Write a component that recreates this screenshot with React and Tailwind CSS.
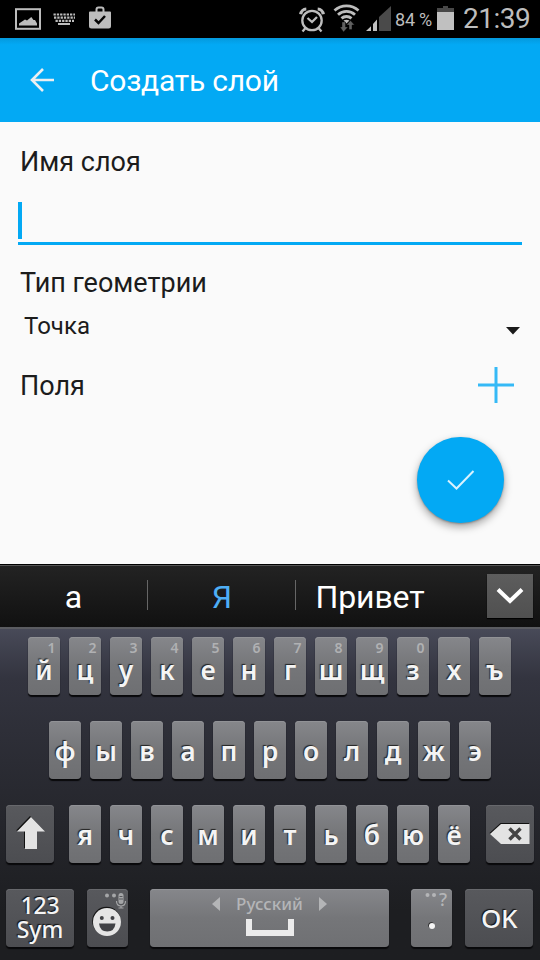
import React from 'react';

const NUMS = '1234567890';

function Key({ label, hint, top }) {
  return (
    <div className="relative flex h-[58px] w-8 shrink-0 items-start justify-center rounded-[4px] bg-linear-to-b from-[#86878b] via-[#757679] to-[#6e6f72] shadow-[0_2px_1px_#08080a,inset_0_1px_0_#919296]">
      {hint && <span className="absolute top-[4px] right-[4.500px] font-['Noto_Sans',sans-serif] text-[14px] leading-[14px] font-semibold text-[#b0b1b3]">{hint}</span>}
      <span className={`${top ? 'mt-[21px]' : 'mt-[18px]'} font-['Noto_Sans',sans-serif] text-[26.500px] leading-6 font-semibold text-[#f4f4f4] [text-shadow:-1px_-1px_1px_#222]`}>{label}</span>
    </div>
  );
}

function DarkKey({ className, children }) {
  return (
    <div className={`relative flex h-[58px] shrink-0 items-center justify-center rounded-[4px] bg-linear-to-b from-[#58595d] to-[#4c4d51] shadow-[0_2px_1px_#08080a,inset_0_1px_0_#67686c] ${className}`}>
      {children}
    </div>
  );
}

function StatusBar() {
  return (
    <div className="flex h-[38px] bg-black">
      <svg width="120" height="38" viewBox="0 0 120 38" fill="#bdbdbd">
        <rect x="16" y="9.2" width="24" height="19.6" fill="none" stroke="#bdbdbd" strokeWidth="2" />
        <path d="M19 25.5v-2l6-4 2 1 4.3-3.5 2.2 3h1.500l2 3.500v2z" />
        <path d="M53.500 14.500h21.500M54 17.700h21" stroke="#bdbdbd" strokeWidth="2.200" strokeDasharray="2.300 1" fill="none" />
        <path d="M55.500 20.900h18.500" stroke="#bdbdbd" strokeWidth="2.200" strokeDasharray="2.300 1" fill="none" />
        <rect x="58" y="23" width="12" height="2" />
        <path d="M90 11.500h5.500V9.500q0-3 3-3h3q3 0 3 3v2h5.500q1 0 1 1V26q0 2.500-2.500 2.500h-17Q89 28.500 89 26V12.500q0-1 1-1zm7.500 0h5v-2q0-1-1-1h-3q-1 0-1 1z" />
        <path d="M95 19.500l3.500 3.500 6.500-7" fill="none" stroke="#050505" strokeWidth="2.500" />
      </svg>
      <div className="flex-1" />
      <svg width="104" height="38" viewBox="290 0 104 38" fill="none">
        <g stroke="#bdbdbd" strokeWidth="2.300">
          <circle cx="312" cy="20.500" r="9.700" />
          <path d="M300.700 14.300a6 6 0 0 1 5.600-5.300M323.300 14.300a6 6 0 0 0-5.600-5.300" strokeWidth="3.200" />
          <path d="M305.300 28.200l-2.800 3.300M318.700 28.200l2.800 3.300M307.500 18l4.500 4 5-5" />
        </g>
        <g stroke="#bdbdbd" strokeWidth="2.800">
          <path d="M334.500 10.500a18 18 0 0 1 24 0M338 14.700a12.500 12.500 0 0 1 17 0M341.500 18.400a7.500 7.500 0 0 1 10 0" />
        </g>
        <path d="M343.500 20.600q3-1.500 6 0L346.500 23.500z" fill="#bdbdbd" />
        <path d="M342 22h3.500v5h2.500L343.500 32l-3.500-5h2zM349 29.500V25h-2.500L350.500 20.500l4 4.500H352v4.500z" fill="#606060" stroke="#000" strokeWidth=".4" />
        <path d="M391 6v25h-12V17z" fill="#4a4a4a" />
        <path d="M366 31l5-4.700V31zM373 24l4-4.500V31h-4z" fill="#c0c0c0" />
      </svg>
      <span className="w-[42px] pt-[8px] pl-[1px] font-['Roboto',sans-serif] text-[18px] leading-6 tracking-[-0.2px] whitespace-pre text-[#bdbdbd]">84 %</span>
      <svg width="24" height="38" viewBox="0 0 24 38">
        <path d="M1 8h6V6h5v2h6v22H1z" fill="#484848" />
        <path d="M1 12h17v18H1z" fill="#c0c0c0" />
      </svg>
      <span className="w-[80px] pt-[3px] pl-[3px] font-['Roboto',sans-serif] text-[28px] leading-8 tracking-[-0.500px] text-[#bdbdbd]">21:39</span>
    </div>
  );
}

export default function App() {
  return (
    <div className="flex h-[960px] w-[540px] flex-col overflow-hidden bg-[#fafafa] font-['Roboto',sans-serif]">
      <StatusBar />
      <header className="flex h-[84px] items-center bg-[#03a9f4] bg-linear-to-b from-[#0499dd] from-0% to-[#03a9f4] to-8%">
        <svg className="ml-[30px]" width="26" height="26" viewBox="0 0 26 26" fill="none" stroke="#eceff1" strokeWidth="2.600">
          <path d="M24 13H2M13 2L2 13l11 11" />
        </svg>
        <h1 className="mt-0.5 ml-[34px] text-[30px] leading-9 tracking-[-0.250px] text-white">Создать слой</h1>
      </header>

      <main className="flex h-[442px] flex-col text-[#1c1c1c]">
        <label className="mt-6 ml-5 text-[27px] leading-8">Имя слоя</label>
        <div className="mx-[18px] mt-6 h-[43px] border-b-[3px] border-[#03a9f4]">
          <div className="h-[37px] w-1 bg-[#03a9f4]" />
        </div>
        <label className="mt-[22px] ml-5 text-[27px] leading-8">Тип геометрии</label>
        <div className="mt-[11px] flex h-8 items-center justify-between pr-[19px] pl-6">
          <span className="text-[24px] leading-8">Точка</span>
          <svg className="mt-2.5" width="16" height="8" viewBox="0 0 16 8"><path d="M1 0h14L8 7.600z" fill="#1a1a1a" /></svg>
        </div>
        <div className="mt-[21px] flex h-[44px] items-center justify-between pr-[25px] pl-5">
          <span className="mt-0.5 text-[27px] leading-8">Поля</span>
          <svg width="38" height="38" viewBox="0 0 38 38" fill="none" stroke="#35b9f6" strokeWidth="3"><path d="M19 1v36M1 19h36" /></svg>
        </div>
        <div className="mt-[30px] mr-9 flex h-[86px] w-[87px] items-center justify-center self-end rounded-full bg-[#03a9f4] shadow-[0_4px_8px_rgba(0,0,0,0.35),0_1px_2px_rgba(0,0,0,0.25)]">
          <svg width="30" height="22" viewBox="0 0 30 22" fill="none" stroke="#d9f2fe" strokeWidth="2"><path d="M2 11.500l8.500 8L27.500 2" /></svg>
        </div>
      </main>

      <div className="flex h-[63px] items-center border-t border-black bg-linear-to-b from-[#232323] to-[#111] text-[32px] text-white shadow-[inset_0_1px_0_#555]">
        <span className="mt-0.5 w-[147px] text-center leading-9">а</span>
        <i className="mb-[3px] h-[30px] w-px bg-[#666]" />
        <span className="mt-0.5 w-[148px] text-center leading-9 text-[#4eaef5]">Я</span>
        <i className="mb-[3px] -ml-px h-[30px] w-px bg-[#666]" />
        <span className="mt-0.5 w-[148px] text-center leading-9 tracking-[-0.100px]">Привет</span>
        <div className="ml-[43px] flex h-11 w-[46px] items-center justify-center bg-linear-to-b from-[#5d5d5d] to-[#505050] shadow-[0_1px_1px_#000]">
          <svg width="30" height="20" viewBox="0 0 30 20" fill="none" stroke="#fff" strokeWidth="4"><path d="M3 3.500l12 11.500L27 3.500" /></svg>
        </div>
      </div>

      <div className="flex h-[333px] flex-col gap-[26px] border-t-2 border-[#5b5c61] bg-linear-to-b from-[#484a58] from-0% via-[#33343f] via-15% to-[#1d1e21] to-85% pt-2">
        <div className="flex gap-[9px] pl-7">
          {[...'йцукенгшщзхъ'].map((c, i) => <Key key={c} label={c} hint={NUMS[i]} top />)}
        </div>
        <div className="flex gap-[9px] pl-[49px]">
          {[...'фывапролджэ'].map((c) => <Key key={c} label={c} />)}
        </div>
        <div className="flex pl-1.5">
          <DarkKey className="w-12">
            <svg className="-mt-0.5 ml-0.5" width="30" height="36" viewBox="0 0 30 36"><path d="M15 2L1 16.500h8V34h12V16.500h8z" fill="#111" transform="translate(-1 -1)" /><path d="M15 2L1 16.500h8V34h12V16.500h8z" fill="#e3e3e3" /></svg>
          </DarkKey>
          <div className="ml-[15px] flex gap-[9px]">
            {[...'ячсмитьбюё'].map((c) => <Key key={c} label={c} />)}
          </div>
          <DarkKey className="ml-4 w-12">
            <svg width="42" height="24" viewBox="0 0 42 24"><path d="M1 12L12 2h28.500v20H12z" fill="#111" transform="translate(-.5 -1)" /><path d="M1 12L12 2h28.500v20H12z" fill="#e3e3e3" /><path d="M20.500 6.500l11 11M31.500 6.500l-11 11" stroke="#444" strokeWidth="3.500" /></svg>
          </DarkKey>
        </div>
        <div className="flex pl-1.5 font-['Noto_Sans',sans-serif] text-[#f5f5f5]">
          <DarkKey className="w-[68px] flex-col">
            <span className="text-[23px] leading-6 font-medium tracking-[-0.300px] [text-shadow:-1px_-1px_1px_#111]">123</span>
            <span className="mb-0.5 text-[23px] leading-6 font-medium [text-shadow:-1px_-1px_1px_#111]">Sym</span>
          </DarkKey>
          <DarkKey className="ml-[13px] w-[41px]">
            <svg width="41" height="58" viewBox="0 0 41 58">
              <g fill="#a5a6a8"><circle cx="20" cy="6.500" r="2" /><circle cx="27" cy="6.500" r="2" /><rect x="31.500" y="4" width="5" height="11" rx="2.500" /></g>
              <path d="M29.500 12q0 5 4.500 5t4.500-5M34 17v2M31.500 19h5" fill="none" stroke="#a5a6a8" strokeWidth="1.200" />
              <path d="M32.500 7.500h3M32 10h4" fill="none" stroke="#55565a" strokeWidth="1" />
              <circle cx="19.500" cy="32" r="14.300" fill="#151515" /><circle cx="20" cy="33" r="14" fill="#e5e5e5" />
              <g fill="#414246"><circle cx="14.800" cy="29" r="2" /><circle cx="25.500" cy="29" r="2" /><path d="M12 34.500h16.500q-1 8-8.250 8T12 34.500z" /></g>
            </svg>
          </DarkKey>
          <div className="ml-[22px] flex h-[58px] w-[239px] flex-col items-center rounded-[4px] bg-linear-to-b from-[#86878b] via-[#757679] to-[#6f7073] shadow-[0_2px_1px_#08080a,inset_0_1px_0_#919296]">
            <div className="flex h-[29px] items-center gap-[15px] pt-px text-[17px] font-medium text-[#b4b5b7]">
              <svg width="10" height="14" viewBox="0 0 10 14"><path d="M9 0v14L1 7z" fill="currentColor" /></svg>
              <span>Русский</span>
              <svg width="10" height="14" viewBox="0 0 10 14"><path d="M1 0v14l8-7z" fill="currentColor" /></svg>
            </div>
            <div className="mt-px h-[17px] w-12 border-[6px] border-t-0 border-[#ebebeb]" />
          </div>
          <div className="relative ml-[22px] h-[58px] w-[41px] rounded-[4px] bg-linear-to-b from-[#86878b] via-[#757679] to-[#6f7073] shadow-[0_2px_1px_#08080a,inset_0_1px_0_#919296]">
            <svg className="absolute top-0 left-0" width="41" height="58" viewBox="0 0 41 58"><g fill="#b4b5b7"><circle cx="16.500" cy="6" r="2" /><circle cx="23" cy="6" r="2" /></g><circle cx="20.300" cy="36.300" r="3" fill="#222" /><circle cx="21" cy="37" r="3" fill="#f5f5f5" /></svg>
            <span className="absolute top-0 right-[5px] text-[18px] leading-[21px] font-medium text-[#b4b5b7]">?</span>
          </div>
          <DarkKey className="ml-[13px] w-[68px]">
            <span className="text-[26px] leading-8 font-medium tracking-[-0.500px] [text-shadow:-1px_-1px_1px_#111]">OK</span>
          </DarkKey>
        </div>
      </div>
    </div>
  );
}
